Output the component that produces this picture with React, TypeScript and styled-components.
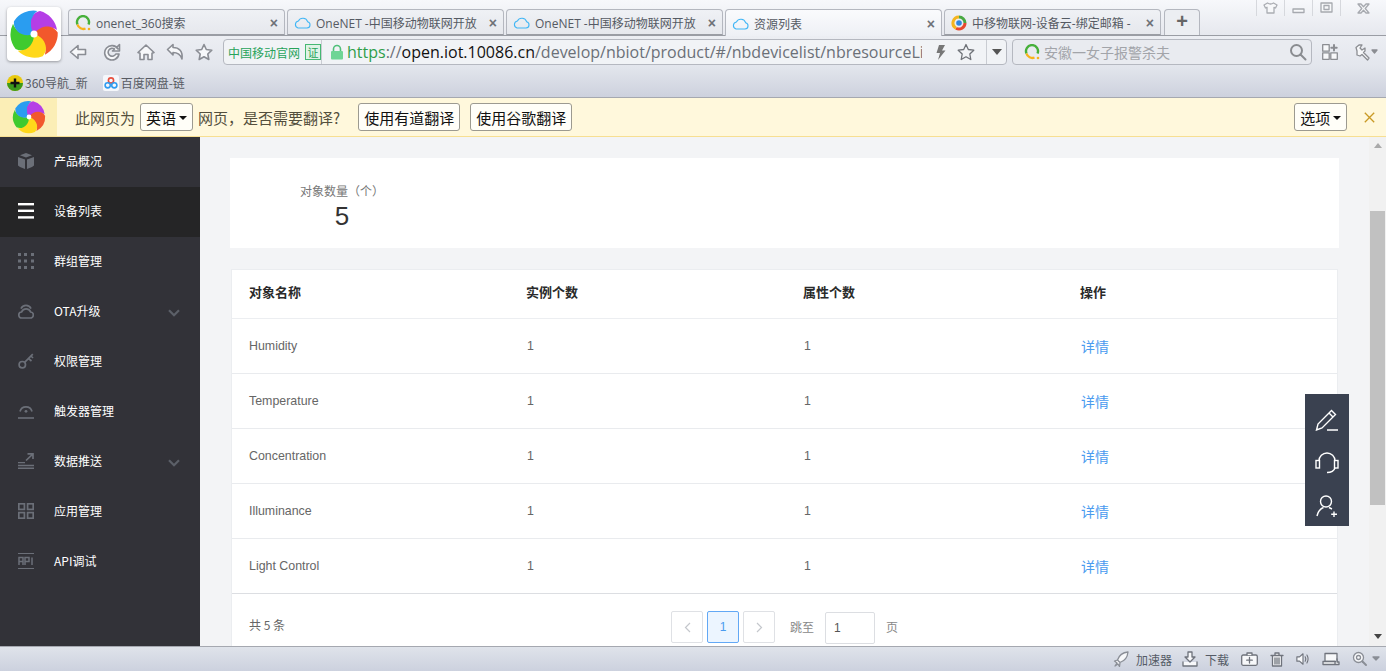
import React from "react";
import styled, { createGlobalStyle } from "styled-components";

const CJK = `"Noto Sans CJK SC", sans-serif`;
const Global = createGlobalStyle`
  html, body { margin: 0; padding: 0; height: 100%; overflow: hidden; }
  body { font-family: "Liberation Sans", ${CJK}; }
  #root { height: 100%; }
  * { box-sizing: border-box; }
`;

const Window = styled.div`
  position: relative; width: 1386px; height: 671px; display: flex; flex-direction: column; overflow: hidden; background: #f3f4f6;
`;
const LogoTile = styled.div`
  position: absolute; left: 7px; top: 7px; width: 54px; height: 54px; border-radius: 4px; background: #fff;
  box-shadow: 0 1px 3px rgba(0,0,0,.35); display: flex; align-items: center; justify-content: center; z-index: 5;
`;
const TabStrip = styled.div`
  height: 36px; flex: none; padding: 9px 0 0 68px; display: flex; gap: 2px; position: relative;
  background: linear-gradient(#f7f8fb, #e6e8ee); border-bottom: 1px solid #9a9da4;
`;
const Tab = styled.div<{ $active?: boolean }>`
  width: 217px; display: flex; align-items: center; padding: 1px 6px 0 6px; gap: 5px;
  border: 1px solid #b4b7bf; border-bottom: ${p => (p.$active ? "none" : "1px solid #9a9da4")}; border-radius: 4px 4px 0 0;
  height: ${p => (p.$active ? "27px" : "26px")};
  background: ${p => (p.$active ? "linear-gradient(#fafbfd, #eef0f5)" : "linear-gradient(#eff1f5, #e6e8ed)")};
  font: 12px "Open Sans", ${CJK}; color: #555a63; z-index: 1;
`;
const TabTitle = styled.span`
  flex: 1; overflow: hidden; white-space: nowrap;
`;
const TabClose = styled.span`
  font: bold 14px "Liberation Sans", sans-serif; color: #6e7178;
`;
const NewTab = styled.div`
  width: 36px; height: 26px; margin-left: 1px; border: 1px solid #b4b7bf; border-bottom: none; border-radius: 4px 4px 0 0;
  background: #eceef2; color: #666; font: bold 20px/23px "Liberation Sans", sans-serif; text-align: center;
`;
const WindowButtons = styled.div`
  position: absolute; right: 0; top: 0; width: 130px; height: 16px; display: grid; grid-template-columns: 28px 28px 28px 46px;
`;
const WinBtn = styled.div`
  border-left: 1px solid #d6d8dd; display: flex; align-items: center; justify-content: center;
`;
const Toolbar = styled.div`
  height: 30px; flex: none; padding: 3px 0 0 68px; display: flex; align-items: flex-start;
  background: linear-gradient(#eceef3, #e3e6ed);
`;
const NavIcons = styled.div`
  width: 155px; height: 26px; display: flex; align-items: center; padding-left: 1px;
`;
const NavSlot = styled.span<{ $w: number }>`
  width: ${p => p.$w}px; display: flex; justify-content: flex-start;
`;
const AddressBox = styled.div`
  width: 784px; height: 26px; display: flex; align-items: center; border: 1px solid #b5b8c0; border-radius: 4px; background: #f1f3f6; overflow: hidden;
`;
const CertBadge = styled.div`
  width: 98px; height: 100%; flex: none; display: flex; align-items: center; gap: 5px; padding-left: 4px; border-right: 1px solid #c9ccd2;
  color: #27a35a; font: 12px ${CJK};
`;
const CertMark = styled.span`
  width: 16px; height: 16px; border: 1px solid #46b873; background: #dff3e6; font-size: 11px; line-height: 14px; text-align: center;
`;
const Url = styled.div`
  width: 575px; flex: none; margin-left: 3px; overflow: hidden; white-space: nowrap; font: 16px "Open Sans", sans-serif; color: #6b7078;
`;
const UrlGreen = styled.span`color: #2f9e4a;`;
const UrlDark = styled.span`color: #111;`;
const AddressTools = styled.div`
  flex: 1; height: 100%; display: flex; align-items: center; padding-left: 13px; gap: 11px;
`;
const Arrow = styled.div`
  width: 20px; flex: none; height: 100%; border-left: 1px solid #c9ccd2; margin-left: auto; display: flex; align-items: center; justify-content: center;
  &::after { content: ""; border: 5px solid transparent; border-top: 6px solid #555; border-bottom: 0; }
`;
const SearchBox = styled.div`
  width: 300px; height: 26px; margin-left: 5px; display: flex; align-items: center; padding: 0 4px 0 11px; gap: 4px;
  border: 1px solid #b5b8c0; border-radius: 4px; background: #e9ebf0; color: #a2a4a9; font: 14px ${CJK};
`;
const SearchText = styled.span`flex: 1;`;
const ToolIcons = styled.div`
  display: flex; align-items: center; height: 26px; gap: 16px; margin-left: 10px;
`;
const Bookmarks = styled.div`
  height: 32px; flex: none; display: flex; align-items: center; padding: 2px 0 0 7px; gap: 15px;
  background: linear-gradient(#e3e6ed, #cdd1dd); border-bottom: 1px solid #a5a8b0;
  font: 12px ${CJK}; color: #575b63;
`;
const Bookmark = styled.div`display: flex; align-items: center; gap: 2px;`;
const TranslateBar = styled.div`
  height: 39px; flex: none; display: flex; align-items: center; background: #fff8dc; border-bottom: 1px solid #f7df92;
  font: 15px ${CJK}; color: #544f3d;
`;
const TransLogo = styled.div`
  width: 57px; height: 100%; flex: none; background: #fbeeb6; display: flex; align-items: center; justify-content: center;
`;
const TransLabel = styled.span<{ $left: number }>`margin-left: ${p => p.$left}px; white-space: nowrap;`;
const TransButton = styled.div<{ $w: number; $left: number }>`
  width: ${p => p.$w}px; margin-left: ${p => p.$left}px; height: 28px; flex: none; display: flex; align-items: center; justify-content: center; gap: 3px;
  border: 1px solid #9c9a90; border-radius: 3px; background: #fffef8; color: #111; font-size: 15px; white-space: nowrap;
`;
const Caret = styled.span`
  border: 4px solid transparent; border-top: 4px solid #111; border-bottom: 0; margin-top: 2px;
`;
const BarClose = styled.div`margin-left: 17px; color: #c99a25; display: flex;`;
const Body = styled.div`
  flex: 1; min-height: 0; display: flex; position: relative; overflow: hidden;
`;
const Sidebar = styled.nav`
  width: 200px; flex: none; background: #323238;
`;
const NavItem = styled.div<{ $active?: boolean }>`
  height: 50px; display: flex; align-items: center; padding: 0 20px 3px 18px; gap: 20px;
  background: ${p => (p.$active ? "#252526" : "transparent")}; color: #fff; font: 12px ${CJK};
`;
const NavLabel = styled.span`flex: 1; margin-bottom: 1px;`;
const Main = styled.main`
  flex: 1; min-width: 0; padding: 21px 47px 0 30px; overflow: hidden;
`;
const StatCard = styled.section`
  height: 90px; background: #fff; padding: 25px 0 0 70px;
`;
const Stat = styled.div`width: 84px; text-align: center;`;
const StatLabel = styled.div`font: 12px/16px ${CJK}; color: #777; white-space: nowrap;`;
const StatValue = styled.div`font: 26px/30px "Liberation Sans", sans-serif; color: #333; margin-top: 2px;`;
const TableCard = styled.section`
  margin: 21px 1px 0; background: #fff; border: 1px solid #ebedf0; border-bottom: none;
`;
const Row = styled.div<{ $head?: boolean }>`
  height: ${p => (p.$head ? "49px" : "55px")}; display: grid; grid-template-columns: repeat(4, 277px); align-items: center; padding: 0 0 ${p => (p.$head ? "5px" : "0")} 17px;
  border-bottom: 1px solid ${p => (p.$head ? "#eceef1" : "#e9ebee")};
  font: ${p => (p.$head ? "bold 13px" : "12.4px")} ${`"Liberation Sans", ${CJK}`}; color: ${p => (p.$head ? "#2a2a2a" : "#666")};
`;
const Count = styled.span`padding-left: 1px;`;
const DetailLink = styled.a`
  color: #4a9bef; font: 14px ${CJK}; margin: -1px 0 0 1px;
`;
const TableFooter = styled.div`
  height: 60px; display: grid; grid-template-columns: 440px auto; align-items: start; padding-left: 17px; color: #666; font: 12px ${CJK};
  border-top: 1px solid #dcdee2; margin-top: -1px;
`;
const Total = styled.span`margin-top: 22px;`;
const Pager = styled.div`
  margin-top: 17px; display: flex; align-items: flex-start; gap: 4px;
  grid-column: 2; grid-row: 1; margin-left: -18px;
`;
const PageBtn = styled.div<{ $active?: boolean }>`
  width: 32px; height: 32px; display: flex; align-items: center; justify-content: center; border-radius: 2px;
  border: 1px solid ${p => (p.$active ? "#62a8f5" : "#dfe1e5")}; background: ${p => (p.$active ? "#ecf5ff" : "#fff")};
  color: #4a9bef; font: 12px "Liberation Sans", sans-serif;
`;
const JumpLabel = styled.span<{ $left: number }>`margin: 7px 0 0 ${p => p.$left}px; color: #888; font-size: 12px;`;
const JumpInput = styled.div`
  width: 50px; height: 32px; margin: 1px 0 0 7px; border: 1px solid #dcdee2; border-radius: 2px; padding: 8px 0 0 8px; color: #555; font: 12px "Liberation Sans", sans-serif;
`;
const FloatPanel = styled.aside`
  position: absolute; left: 1305px; top: 257px; width: 44px; height: 132px; background: #3a4150;
  display: flex; flex-direction: column; align-items: center; gap: 21px; padding-top: 15px;
`;
const Scrollbar = styled.div`
  position: absolute; right: 0; top: 0; bottom: 0; width: 17px; background: #f1f1f1; display: flex; flex-direction: column; align-items: center;
`;
const ScrollArrow = styled.div<{ $down?: boolean }>`
  width: 0; height: 0; border: 4px solid transparent;
  ${p => (p.$down ? "border-top: 5px solid #444; border-bottom: 0; margin-top: 486px;" : "border-bottom: 5px solid #aaa; border-top: 0; margin-top: 6px;")}
`;
const ScrollThumb = styled.div`
  position: absolute; left: 1px; right: 1px; top: 74px; height: 294px; background: #c1c1c1;
`;
const StatusBar = styled.footer`
  height: 25px; flex: none; display: flex; align-items: center; justify-content: flex-end; padding-right: 6px; gap: 12px;
  background: linear-gradient(#dfe3ea, #ccd1de); border-top: 1px solid #a5a8b0; font: 12px ${CJK}; color: #555b66;
`;
const StatusItem = styled.span<{ $trail?: number }>`
  display: flex; align-items: center; gap: 7px; margin-right: ${p => p.$trail ?? 0}px;
`;

const BLADES: [number, string][] = [
  [0, "#b53ee6"], [72, "#f2582c"], [144, "#ffd81a"], [216, "#3fca2f"], [288, "#2a9df0"],
];
const Pinwheel = ({ size }: { size: number }) => (
  <svg width={size} height={size} viewBox="0 0 100 100">
    {BLADES.map(([a, c]) => (
      <path key={c} transform={`rotate(${a} 50 50)`} fill={c} d="M50 50C36 32 42 8 62 4A47 47 0 0 1 96 42C82 32 62 36 50 50Z" />
    ))}
    <path fill="#b53ee6" d="M50 50C44 40 42 26 46 18C52 26 54 40 50 50Z" />
    <circle cx="50" cy="50" r="7" fill="#fff" />
  </svg>
);
const Ring = ({ size = 16 }: { size?: number }) => (
  <svg width={size} height={size} viewBox="0 0 16 16" fill="none" strokeWidth="2.4">
    <path d="M2.5 9.5A6 6 0 1 1 13.5 9.5" stroke="#46b03a" />
    <path d="M2.5 9.5A6 6 0 0 0 10.5 13.5" stroke="#f7b21b" />
    <circle cx="14" cy="14" r="1.3" fill="#f7b21b" stroke="none" />
  </svg>
);
const Cloud = () => (
  <svg width="17" height="13" viewBox="0 0 17 13" fill="none" stroke="#41b6f5" strokeWidth="1.1">
    <path d="M4 12H13A3.2 3.2 0 0 0 13.6 5.7 5 5 0 0 0 4.4 5 3.6 3.6 0 0 0 4 12Z" />
  </svg>
);
const Multi = () => (
  <svg width="16" height="16" viewBox="0 0 16 16" fill="none" strokeWidth="3">
    <path d="M8 2A6 6 0 0 1 14 8" stroke="#49a942" />
    <path d="M14 8A6 6 0 0 1 5 13.2" stroke="#e8492e" />
    <path d="M5 13.2A6 6 0 0 1 8 2" stroke="#f4b51f" />
    <circle cx="8" cy="8" r="2.8" fill="#2f86e0" stroke="none" />
  </svg>
);
const G = ({ w = 20, h = 20, box, children, stroke = "#7d8087", fill = "#f7f8fa", sw = 1.3 }: any) => (
  <svg width={w} height={h} viewBox={box || `0 0 ${w} ${h}`} fill={fill} stroke={stroke} strokeWidth={sw} strokeLinejoin="round" strokeLinecap="round">{children}</svg>
);
const Side = ({ children, fill = "none" }: any) => (
  <svg width="16" height="16" viewBox="0 0 16 16" fill={fill} stroke={fill === "none" ? "#6b6f78" : "none"} strokeWidth="1.7" style={{ flex: "none" }}>{children}</svg>
);
const icons: Record<string, React.ReactNode> = {
  box: <Side fill="#6b6f78"><path d="M8 0l6 2.2-6 2.3-6-2.3zM0 4l7 2.6V16l-5-2-2-1.5zM16 4L9 6.6V16l5-2 2-1.5z" /></Side>,
  list: <svg width="16" height="16" viewBox="0 0 16 16" fill="#fff" style={{ flex: "none" }}><rect y="0" width="16" height="2.4" /><rect y="6.6" width="16" height="2.4" /><rect y="13.2" width="16" height="2.4" /></svg>,
  dots: <Side fill="#6b6f78">{[0, 6, 13].flatMap(x => [0, 6.5, 13].map(y => <rect key={`${x}${y}`} x={x} y={y} width="3" height="3" />))}</Side>,
  cloud: <Side><path d="M3 5.6A5.5 5.5 0 0 1 13 5.6" /><path d="M4 15H12A3 3 0 0 0 12.6 9 4.8 4.8 0 0 0 3.6 9 3 3 0 0 0 4 15Z" /></Side>,
  key: <Side><circle cx="4.3" cy="11.7" r="3.2" /><path d="M6.6 9.4L14.8 1.2M10.5 5.5L13.5 8M13 3L15 5" /></Side>,
  trigger: <Side><path d="M2 8.5A6.2 6.2 0 0 1 14 8.5" /><circle cx="8" cy="8.3" r="1.4" fill="#6b6f78" stroke="none" /><path d="M0 15H16" strokeWidth="1.6" /></Side>,
  push: <Side><path d="M0 9.6H7M0 12.5H16M0 15.3H16" strokeWidth="1.4" /><path d="M8 7.5L15 .8M9.5.8H15V6" /></Side>,
  apps: <Side><rect x=".8" y=".8" width="5.6" height="5.6" /><rect x="9.6" y=".8" width="5.6" height="5.6" /><rect x=".8" y="9.6" width="5.6" height="5.6" /><rect x="9.6" y="9.6" width="5.6" height="5.6" /></Side>,
  api: <Side><path d="M0 .5H16M0 15.5H16" strokeWidth="1" /><path d="M1 12V4.5H5V12M1 8.5H5M7 12V4.5H11V8.5H7M14 4.5V12" strokeWidth="1.5" /></Side>,
};
const Chevron = () => (
  <svg width="12" height="8" viewBox="0 0 12 8" fill="none" stroke="#5c6068" strokeWidth="2.2" style={{ marginTop: 4 }}><path d="M1 1.2L6 6.2 11 1.2" /></svg>
);
const navs = [
  ["box", "产品概况"], ["list", "设备列表", "a"], ["dots", "群组管理"], ["cloud", "OTA升级", "c"], ["key", "权限管理"],
  ["trigger", "触发器管理"], ["push", "数据推送", "c"], ["apps", "应用管理"], ["api", "API调试"],
];
const rows = ["Humidity", "Temperature", "Concentration", "Illuminance", "Light Control"];

export default function App() {
  return (
    <Window>
      <Global />
      <LogoTile><Pinwheel size={50} /></LogoTile>
      <TabStrip>
        <Tab><Ring /><TabTitle>onenet_360搜索</TabTitle><TabClose>×</TabClose></Tab>
        <Tab><Cloud /><TabTitle>OneNET -中国移动物联网开放</TabTitle><TabClose>×</TabClose></Tab>
        <Tab><Cloud /><TabTitle>OneNET -中国移动物联网开放</TabTitle><TabClose>×</TabClose></Tab>
        <Tab $active><Cloud /><TabTitle>资源列表</TabTitle><TabClose>×</TabClose></Tab>
        <Tab><Multi /><TabTitle>中移物联网-设备云-绑定邮箱 -</TabTitle><TabClose>×</TabClose></Tab>
        <NewTab>+</NewTab>
        <WindowButtons>
          <WinBtn><G w={15} h={12} stroke="#aaadb3"><path d="M4.5 1L1 3l1.5 3 1.5-.7V11h7V5.3l1.5.7L14 3l-3.5-2q-3 2-6 0Z" /></G></WinBtn>
          <WinBtn><G w={13} h={12} stroke="#a6a9af"><rect x="1" y="7" width="11" height="3.5" /></G></WinBtn>
          <WinBtn><G w={13} h={12} stroke="#a6a9af"><rect x="1" y="1" width="11" height="9" /><rect x="4" y="3.5" width="5" height="4" /></G></WinBtn>
          <WinBtn><G w={13} h={11} stroke="#a6a9af"><path d="M1 1H4L6.5 3.8 9 1H12L8.2 5.5 12 10H9L6.5 7.2 4 10H1L4.8 5.5Z" /></G></WinBtn>
        </WindowButtons>
      </TabStrip>
      <Toolbar>
        <NavIcons>
          <NavSlot $w={34}><G w={18} h={18} sw={1.6} stroke="#8a8d94"><path d="M1.5 9L9 2.5V6.5H16.5V11.5H9V15.5Z" /></G></NavSlot>
          <NavSlot $w={34}><G w={18} h={18} sw={1.6} stroke="#8a8d94"><path d="M15 6A7.2 7.2 0 1 0 16 11H12.8A4 4 0 1 1 11.5 6L9.5 8H16.5V1.5L14 4" /></G></NavSlot>
          <NavSlot $w={29}><G w={18} h={18} sw={1.6} stroke="#8a8d94"><path d="M1 9.5L9 2l8 7.5-2 .8V16.5H11V11.5H7V16.5H3V10.3Z" /></G></NavSlot>
          <NavSlot $w={29}><G w={18} h={18} sw={1.6} stroke="#8a8d94"><path d="M1.5 6.5L7 1.5V4.5C13 4.5 17 8 16 16C14.5 11.5 12 9.5 7 9.5V12Z" /></G></NavSlot>
          <NavSlot $w={26}><G w={18} h={18} sw={1.6} stroke="#8a8d94"><path d="M9 1.5L11.3 6.5 16.8 7.2 12.8 11 13.8 16.5 9 13.8 4.2 16.5 5.2 11 1.2 7.2 6.7 6.5Z" /></G></NavSlot>
        </NavIcons>
        <AddressBox>
          <CertBadge>中国移动官网<CertMark>证</CertMark></CertBadge>
          <svg width="14" height="16" viewBox="0 0 14 16" style={{ marginLeft: 8, flex: "none" }}><path d="M3.5 7V5a3.5 3.5 0 0 1 7 0v2" fill="none" stroke="#4fc07a" strokeWidth="1.6" /><rect x="1" y="7" width="12" height="8.5" rx="1" fill="#6fd596" /></svg>
          <Url><UrlGreen>https</UrlGreen>://<UrlDark>open.iot.10086.cn</UrlDark>/develop/nbiot/product/#/nbdevicelist/nbresourceLi</Url>
          <AddressTools>
            <svg width="11" height="15" viewBox="0 0 11 15" fill="#777"><path d="M4 0H10L7 5.5H10.5L3 15 5 8H1.5Z" /></svg>
            <G w={18} h={18} fill="none" stroke="#6f7278"><path d="M9 1.5L11.3 6.5 16.8 7.2 12.8 11 13.8 16.5 9 13.8 4.2 16.5 5.2 11 1.2 7.2 6.7 6.5Z" /></G>
            <Arrow />
          </AddressTools>
        </AddressBox>
        <SearchBox>
          <Ring size={16} /><SearchText>安徽一女子报警杀夫</SearchText>
          <G w={18} h={18} fill="none" stroke="#8a8c90"><g strokeWidth="2"><circle cx="7.5" cy="7.5" r="5.5" /><path d="M11.5 11.5L16.5 16.5" /></g></G>
        </SearchBox>
        <ToolIcons>
          <G w={16} h={16} stroke="#8b8d92"><rect x=".7" y=".7" width="6.5" height="6.5" /><rect x=".7" y="8.8" width="6.5" height="6.5" /><rect x="8.8" y="8.8" width="6.5" height="6.5" /><path d="M12 1V6.5M9.3 3.8H14.7" strokeWidth="2" /></G>
          <G w={24} h={17} stroke="#8b8d92"><path d="M2 3.5L5 1H8L6 4l2 2 3-2v3L9.5 8.5 15 14l-1.5 2L8 10.5 6 12 3 11V7Z" /><path d="M18 6H23L20.5 9Z" fill="#8b8d92" /></G>
        </ToolIcons>
      </Toolbar>
      <Bookmarks>
        <Bookmark>
          <svg width="16" height="16" viewBox="0 0 16 16"><circle cx="8" cy="8" r="8" fill="#e8c90f" /><path d="M0 8A8 8 0 0 0 16 8Z" fill="#3c9a1d" /><path d="M8 3.5V12.5M3.5 8H12.5" stroke="#111" strokeWidth="2.4" /></svg>
          360导航_新
        </Bookmark>
        <Bookmark>
          <svg width="16" height="16" viewBox="0 0 16 16" fill="none" strokeWidth="1.6"><rect width="16" height="16" rx="2" fill="#f5f7fb" /><circle cx="8" cy="5.5" r="2.6" stroke="#e8503f" /><circle cx="4.7" cy="10.3" r="2.6" stroke="#2f9cf0" /><circle cx="11.3" cy="10.3" r="2.6" stroke="#2f9cf0" /></svg>
          百度网盘-链
        </Bookmark>
      </Bookmarks>
      <TranslateBar>
        <TransLogo><Pinwheel size={34} /></TransLogo>
        <TransLabel $left={18}>此网页为</TransLabel>
        <TransButton $w={53} $left={5}>英语<Caret /></TransButton>
        <TransLabel $left={5}>网页，是否需要翻译?</TransLabel>
        <TransButton $w={102} $left={18}>使用有道翻译</TransButton>
        <TransButton $w={102} $left={10}>使用谷歌翻译</TransButton>
        <TransButton $w={53} $left={722}>选项<Caret /></TransButton>
        <BarClose>
          <svg width="11" height="11" viewBox="0 0 11 11" stroke="currentColor" strokeWidth="1.3"><path d="M.8.8L10.2 10.2M10.2.8L.8 10.2" /></svg>
        </BarClose>
      </TranslateBar>
      <Body>
        <Sidebar>
          {navs.map(([ic, label, flag]) => (
            <NavItem key={label} $active={flag === "a"}>
              {icons[ic]}
              <NavLabel>{label}</NavLabel>
              {flag === "c" && <Chevron />}
            </NavItem>
          ))}
        </Sidebar>
        <Main>
          <StatCard>
            <Stat>
              <StatLabel>对象数量（个）</StatLabel>
              <StatValue>5</StatValue>
            </Stat>
          </StatCard>
          <TableCard>
            <Row $head><span>对象名称</span><span>实例个数</span><span>属性个数</span><span>操作</span></Row>
            {rows.map(r => (
              <Row key={r}><span>{r}</span><Count>1</Count><Count>1</Count><DetailLink>详情</DetailLink></Row>
            ))}
            <TableFooter>
              <Total>共 5 条</Total>
              <Pager>
                <PageBtn><svg width="7" height="11" viewBox="0 0 7 11" fill="none" stroke="#c4c7cc" strokeWidth="1.2"><path d="M6 1L1.5 5.5 6 10" /></svg></PageBtn>
                <PageBtn $active>1</PageBtn>
                <PageBtn><svg width="7" height="11" viewBox="0 0 7 11" fill="none" stroke="#c4c7cc" strokeWidth="1.2"><path d="M1 1L5.5 5.5 1 10" /></svg></PageBtn>
                <JumpLabel $left={11}>跳至</JumpLabel>
                <JumpInput>1</JumpInput>
                <JumpLabel $left={7}>页</JumpLabel>
              </Pager>
            </TableFooter>
          </TableCard>
        </Main>
        <Scrollbar>
          <ScrollArrow />
          <ScrollThumb />
          <ScrollArrow $down />
        </Scrollbar>
        <FloatPanel>
          <svg width="24" height="22" viewBox="0 0 24 22" fill="none" stroke="#fff" strokeWidth="1.4"><path d="M1.5 21L3 15 16.5 1.5 20.5 5.5 7 19Z" /><path d="M14 4L18 8M12 21H23" /></svg>
          <svg width="24" height="22" viewBox="0 0 24 22" fill="none" stroke="#fff" strokeWidth="1.4"><path d="M4 9A8 8 0 0 1 20 9" /><rect x="1" y="8.5" width="3.5" height="7.5" /><rect x="19.5" y="8.5" width="3.5" height="7.5" /><path d="M20 16C19 19 17 20.5 12 20.5" /></svg>
          <svg width="24" height="22" viewBox="0 0 24 22" fill="none" stroke="#fff" strokeWidth="1.4"><circle cx="11" cy="6.5" r="5.5" /><path d="M2 21C3 16 6 13.5 8.5 12.5M14 12.5L17 14M19 16.5V22M16.2 19.2H22" /></svg>
        </FloatPanel>
      </Body>
      <StatusBar>
        <StatusItem $trail={-2}>
          <G w={16} h={16} stroke="#8a8e96"><path d="M15 1C10 1.5 6 4.5 4.5 9L7 11.5C11.5 10 14.5 6 15 1ZM4.5 9L1.5 10 4 12 2 15 5 13l1.5 2.5L7 11.5" /></G>
          加速器
        </StatusItem>
        <StatusItem>
          <G w={16} h={16} stroke="#6f737c"><path d="M6 1H10V6H13L8 11 3 6H6ZM1 11V15H15V11" /></G>
          下载
        </StatusItem>
        <G w={17} h={14} stroke="#6f737c"><rect x=".7" y="3" width="15.6" height="10.3" rx="1.5" /><path d="M6 3V1H11V3M8.5 5.5V11M5.7 8.2H11.3" /></G>
        <G w={14} h={15} stroke="#6f737c"><path d="M1 3.5H13M5 3.5V1H9V3.5M2.5 3.5V14H11.5V3.5M5 6V12M7 6V12M9 6V12" /></G>
        <G w={14} h={14} box="0 0 16 14" stroke="#6f737c"><path d="M1 4.5H4L8 1V13L4 9.5H1ZM10.5 4.5Q12 7 10.5 9.5M12.5 2.5Q15 7 12.5 11.5" /></G>
        <G w={18} h={14} stroke="#6f737c"><rect x="3" y="1.5" width="12" height="8" /><path d="M1 9.5H13V12.5H1ZM15 7V10H17V12.5H13" /></G>
        <G w={28} h={16} stroke="#8a8e96"><circle cx="6.5" cy="6.5" r="5" /><circle cx="6.5" cy="6.5" r="2" /><path d="M10.5 10.5L14 14" strokeWidth="2" /><path d="M21 6H27L24 9Z" fill="#8a8e96" /></G>
      </StatusBar>
    </Window>
  );
}
